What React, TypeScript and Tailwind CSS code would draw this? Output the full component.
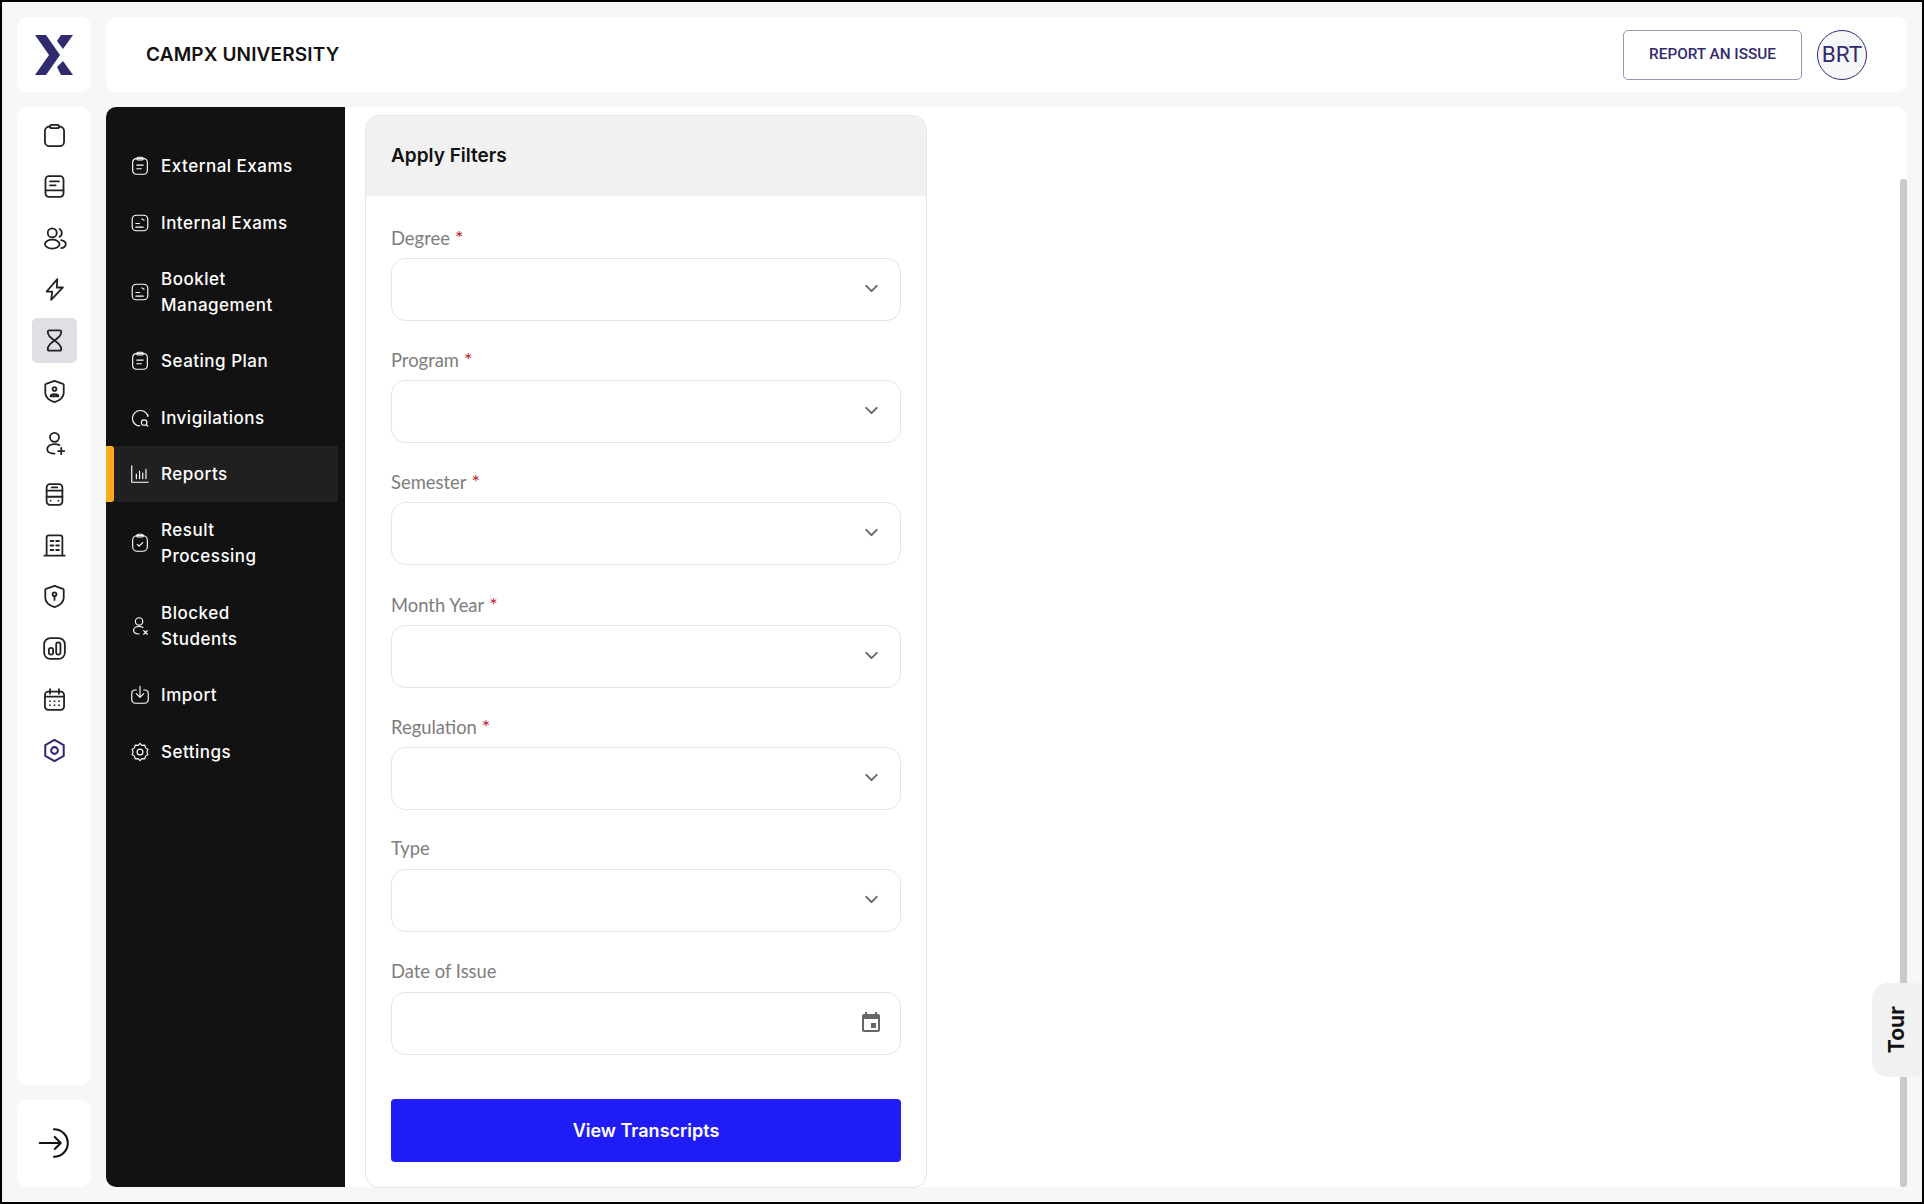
import { ChevronDown } from "lucide-react";
import type { ReactNode } from "react";

const poppins = { fontFamily: "Inter, 'Noto Sans', sans-serif" };

function Glyph({ size = 24, children, color = "#222222", sw = 1.7 }: { size?: number; children: ReactNode; color?: string; sw?: number }) {
  return (
    <svg width={size} height={size} viewBox="0 0 24 24" fill="none" stroke={color} strokeWidth={sw} strokeLinecap="round" strokeLinejoin="round">
      {children}
    </svg>
  );
}

const shield = "M12 2.5 19.5 5.2a1 1 0 0 1 .7 1V13c0 3.8-3.6 6.8-8.2 8.5C7.4 19.8 3.8 16.8 3.8 13V6.2a1 1 0 0 1 .7-1Z";

const railIcons: ReactNode[] = [
  <><rect x="3.5" y="4" width="17" height="17.5" rx="4" /><rect x="8" y="2.5" width="8" height="3" rx="1.5" fill="white" /></>,
  <><rect x="4" y="2.8" width="16" height="18.4" rx="3" /><path d="M4 15.5h16M8 7.5h8M8 11h5" /></>,
  <><circle cx="10" cy="7" r="4" /><ellipse cx="10" cy="17" rx="6.5" ry="4" /><path d="M16.5 3.5a4 4 0 0 1 0 7M18 13.5c2.6.5 4 2 4 3.5s-1.400 3-4 3.500" /></>,
  <path d="M14.500 2.800 5 13.800h5L9 21.200 19.500 10.200H14Z" />,
  <path d="M7.500 3h9a1.500 1.500 0 0 1 1.500 1.500C18 8 15 10 12 12 9 10 6 8 6 4.500A1.500 1.500 0 0 1 7.500 3ZM12 12c3 2 6 4 6 7.500a1.500 1.500 0 0 1-1.500 1.500h-9A1.500 1.500 0 0 1 6 19.500C6 16 9 14 12 12Z" />,
  <><path d={shield} /><circle cx="12" cy="9.800" r="1.700" /><path d="M8.500 16.200c0-2.600 7-2.600 7 0Z" /></>,
  <><circle cx="12" cy="6.500" r="4" /><path d="M16.500 13.500c-1.400-.7-2.900-1-4.500-1-3.500 0-6.500 2-6.500 4.500s3 4 6.500 4M18 16v5.500M15.200 18.700h5.500" /></>,
  <><rect x="5" y="2.800" width="14" height="18.400" rx="3" /><path d="M5 8.500h14M5 14h14M9.500 5.700h5M8.500 17.500h.01M15.500 17.500h.01" /></>,
  <path d="M5 21V5a2 2 0 0 1 2-2h10a2 2 0 0 1 2 2v16M3 21h18M8.500 8h2.500M13.500 8h2.500M8.500 12h2.500M13.500 12h2.500M8.500 16h2.500M13.500 16h2.500" />,
  <><path d={shield} /><circle cx="12" cy="10" r="1.700" /><path d="M12 11.700v3.300" /></>,
  <><rect x="2.800" y="2.800" width="18.400" height="18.400" rx="5.500" /><rect x="7" y="11.500" width="3.800" height="6" rx="1.900" /><rect x="13.500" y="6.500" width="3.800" height="11" rx="1.900" /></>,
  <><rect x="3.500" y="5" width="17" height="16.200" rx="3" /><path d="M8 2.800v4M16 2.800v4M3.500 9.500h17M8 13.500h.01M12 13.500h.01M16 13.500h.01M8 17h.01M12 17h.01M16 17h.01" /></>,
];

const hexIcon = (
  <Glyph size={27} color="#2f2b6e" sw={1.8}>
    <path d="M12 2.500 20.200 7.200v9.600L12 21.500 3.800 16.800V7.200Z" />
    <circle cx="12" cy="12" r="3" />
  </Glyph>
);

const clipLines = <><rect x="4" y="4" width="16" height="17" rx="4" /><rect x="8.500" y="2.500" width="7" height="3" rx="1.500" /><path d="M8.500 11h7M8.500 15h5" /></>;
const noteCorner = <><rect x="3.500" y="3.500" width="17" height="17" rx="4.500" /><path d="M14 7.500l2.500 1.500M7.500 12.500h4M7.500 16.500h8" /></>;

type NavItem = { label: string[]; icon: ReactNode; active?: boolean };

const navItems: NavItem[] = [
  { label: ["External Exams"], icon: clipLines },
  { label: ["Internal Exams"], icon: noteCorner },
  { label: ["Booklet", "Management"], icon: noteCorner },
  { label: ["Seating Plan"], icon: clipLines },
  { label: ["Invigilations"], icon: <><path d="M20.500 10A8.500 8.500 0 1 0 10 20.500" /><path d="M20.500 10V8M10 20.500h2" /><circle cx="16.500" cy="17" r="3" /><path d="M19 19.500l1.500 1.500" /></> },
  { label: ["Reports"], icon: <path d="M3 3v18h18M8 17v-5M11.500 17v-8M15 17v-6M18.500 17V7" />, active: true },
  { label: ["Result", "Processing"], icon: <><rect x="4" y="4" width="16" height="17" rx="5" /><rect x="8.500" y="2.500" width="7" height="3" rx="1.500" /><path d="M9 13.500l2 2 4-4" /></> },
  { label: ["Blocked", "Students"], icon: <><circle cx="11" cy="7" r="4" /><path d="M15 13.500c-1.200-.6-2.500-1-4-1-3.300 0-6 1.800-6 4.200s2.700 4 6 4M16 17l4 4M20 17l-4 4" /></> },
  { label: ["Import"], icon: <path d="M8 6.500H6a3.500 3.500 0 0 0-3 3.500v7a4 4 0 0 0 4 4h10a4 4 0 0 0 4-4v-7a3.500 3.500 0 0 0-3-3.500h-2M12 2.500V14M8 10.500l4 4 4-4" /> },
  { label: ["Settings"], icon: <><path d="M12 2.500l2 2.300 3.200-.3.800 3 2.700 1.700L19.500 12l1.200 2.800-2.700 1.700-.8 3-3.200-.3-2 2.300-2-2.300-3.200.3-.8-3-2.700-1.700L4.500 12 3.300 9.200 6 7.500l.8-3 3.200.3Z" /><circle cx="12" cy="12" r="3.200" /></> },
];

const fields = [
  { label: "Degree", required: true },
  { label: "Program", required: true },
  { label: "Semester", required: true },
  { label: "Month Year", required: true },
  { label: "Regulation", required: true },
  { label: "Type", required: false },
];

function Field({ label, required, children }: { label: string; required?: boolean; children: ReactNode }) {
  return (
    <div>
      <div className="mb-[7px] h-[24px] text-[18.4px] leading-[20px] text-[#7d7d7d] font-['Lato',sans-serif]">
        {label}
        {required ? <span className="ml-[5px] text-[20px] text-[#c0202f]">*</span> : null}
      </div>
      <div className="flex h-[63px] items-center justify-end rounded-[14px] border border-[#e6e6e6] bg-white pr-[18px]">{children}</div>
    </div>
  );
}

export default function App() {
  return (
    <div className="flex h-[1204px] w-full gap-[15px] border-2 border-black bg-[#f6f7f9] p-[15px]">
      <div className="flex w-[74px] shrink-0 flex-col gap-[15px]">
        <div className="flex h-[75px] items-center justify-center rounded-[10px] bg-white">
          <svg width="38" height="40" viewBox="0 0 38 40" fill="#2f2b6e">
            <path d="M0 0h11l14 20-14 20H0l14-20Z" />
            <path d="M26 0h12L28 14l-6-8Z" />
            <path d="M28 26l10 14H26l-4-8Z" />
          </svg>
        </div>
        <div className="flex flex-1 flex-col items-center gap-[6.25px] rounded-[10px] bg-white pt-[6px]">
          {railIcons.map((icon, i) => (
            <div key={i} className={`flex h-[45px] w-[45px] items-center justify-center rounded-[5px] ${i === 4 ? "bg-[#dfe0e5]" : ""}`}>
              <Glyph size={27} sw={1.6}>{icon}</Glyph>
            </div>
          ))}
          <div className="flex h-[45px] w-[45px] items-center justify-center">{hexIcon}</div>
        </div>
        <div className="flex h-[87px] items-center justify-center rounded-[10px] bg-white pb-[2px]">
          <Glyph size={36} sw={1.4} color="#111111">
            <path d="M2.500 12h14M12.500 8l4 4-4 4M12 2.800a9.200 9.200 0 0 1 0 18.400" />
          </Glyph>
        </div>
      </div>

      <div className="flex min-w-0 flex-1 flex-col gap-[15px]">
        <header className="flex h-[75px] items-center justify-between rounded-[10px] bg-white pl-[40px] pr-[40px]">
          <h1 style={poppins} className="pt-[1px] text-[19px] font-semibold tracking-[0.15px] text-[#111111]">CAMPX UNIVERSITY</h1>
          <div className="flex items-center gap-[15px]">
            <button type="button" className="h-[50px] w-[179px] rounded-[5px] border border-[#9a96bb] bg-white font-['Roboto',sans-serif] text-[15.3px] font-medium text-[#2f2b6e]">
              REPORT AN ISSUE
            </button>
            <div className="flex h-[50px] w-[50px] items-center justify-center rounded-full border border-[#2f2b6e] bg-[#f6f7f9] pt-[1px] font-['Roboto',sans-serif] text-[22.5px] text-[#2f2b6e]">
              BRT
            </div>
          </div>
        </header>

        <main className="relative flex min-h-0 flex-1 rounded-[10px] bg-white">
          <nav className="w-[239px] shrink-0 rounded-l-[10px] bg-[#121212] pt-[31px]">
            {navItems.map((item) => (
              <div
                key={item.label[0]}
                className={`relative flex w-[232px] items-center gap-[10px] py-[15.2px] pl-[23px] ${item.active ? "bg-[#202020]" : ""}`}
              >
                {item.active ? <span className="absolute left-0 top-0 h-full w-[8px] rounded-r-[3px] bg-[#fbab1c]" /> : null}
                <Glyph size={22} color="#ffffff" sw={1.25}>{item.icon}</Glyph>
                <span style={poppins} className="text-[17px] font-medium leading-[26px] tracking-[0.5px] text-white">
                  {item.label.map((line) => (
                    <span key={line} className="block">{line}</span>
                  ))}
                </span>
              </div>
            ))}
          </nav>

          <div className="pl-[20px] pt-[8px]">
            <section className="w-[562px] overflow-hidden rounded-[14px] border border-[#e6e6e6] bg-white">
              <div className="flex h-[80px] items-center bg-[#f1f1f1] pl-[25px]">
                <h2 style={poppins} className="text-[19px] font-semibold text-[#111111]">Apply Filters</h2>
              </div>
              <div className="flex flex-col gap-[28.4px] px-[25px] pt-[30.5px]">
                {fields.map((field) => (
                  <Field key={field.label} label={field.label} required={field.required}>
                    <ChevronDown size={21} strokeWidth={2.2} color="#666666" className="-translate-y-[1px]" />
                  </Field>
                ))}
                <Field label="Date of Issue">
                  <svg width="24" height="24" viewBox="0 0 24 24" fill="#666666" className="mr-[-1px]">
                    <path d="M17 12h-5v5h5v-5zM16 1v2H8V1H6v2H5c-1.110 0-1.990.9-1.990 2L3 19c0 1.100.89 2 2 2h14c1.100 0 2-.9 2-2V5c0-1.100-.9-2-2-2h-1V1h-2zm3 18H5V8h14v11z" />
                  </svg>
                </Field>
              </div>
              <div className="px-[25px] pb-[25px] pt-[44px]">
                <button type="button" style={poppins} className="h-[63px] w-full rounded-[4px] bg-[#1f1cf8] text-[18px] font-semibold text-white">
                  View Transcripts
                </button>
              </div>
            </section>
          </div>

          <div className="absolute bottom-0 right-0 top-[72px] w-[7px] rounded-[3px] bg-[#cacaca]" />
          <div className="absolute right-[-15px] top-[876px] flex h-[94px] w-[50px] items-center justify-center rounded-l-[16px] bg-[#f1f1f1] pr-[2px]">
            <span className="-rotate-90 font-['Inter',sans-serif] text-[21px] font-bold text-[#111111]">Tour</span>
          </div>
        </main>
      </div>
    </div>
  );
}
